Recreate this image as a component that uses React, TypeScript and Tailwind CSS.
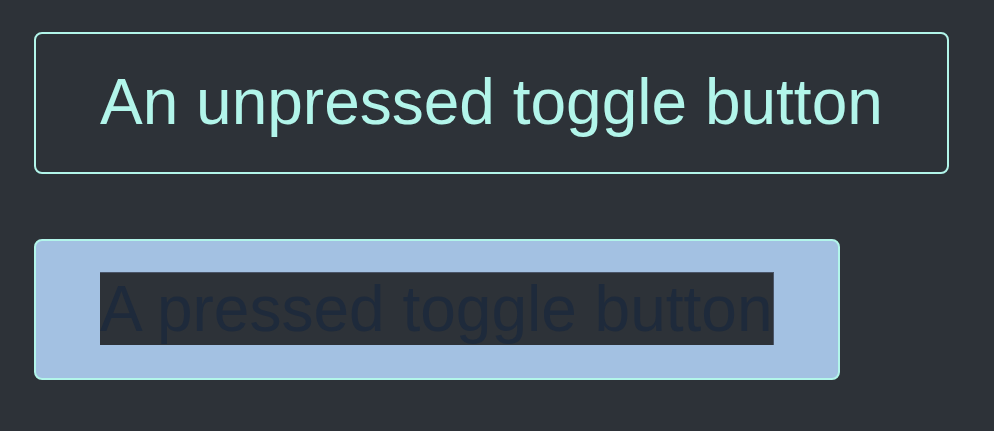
export default function App() {
  return (
    <div className="min-h-screen w-full bg-[#2d3238] pl-[34px] pt-[32px] font-['Liberation_Sans',Arial,sans-serif]">
      <div className="flex flex-col items-start gap-[65px]">
        <button
          aria-pressed="false"
          className="rounded-lg border-2 border-[#b2f5ea] bg-[#2d3238] px-16 py-8 text-[64px] leading-[1.149] text-[#b2f5ea]"
        >
          An unpressed toggle button
        </button>
        <button
          aria-pressed="true"
          className="rounded-lg border-2 border-[#b2f5ea] bg-[#a3c1e2] px-16 py-8 text-[64px] leading-[1.149] text-[#1e2a3b]"
        >
          <span className="border-t border-r border-[#4a5568] bg-[#2d3238]">A pressed toggle button</span>
        </button>
      </div>
    </div>
  );
}
